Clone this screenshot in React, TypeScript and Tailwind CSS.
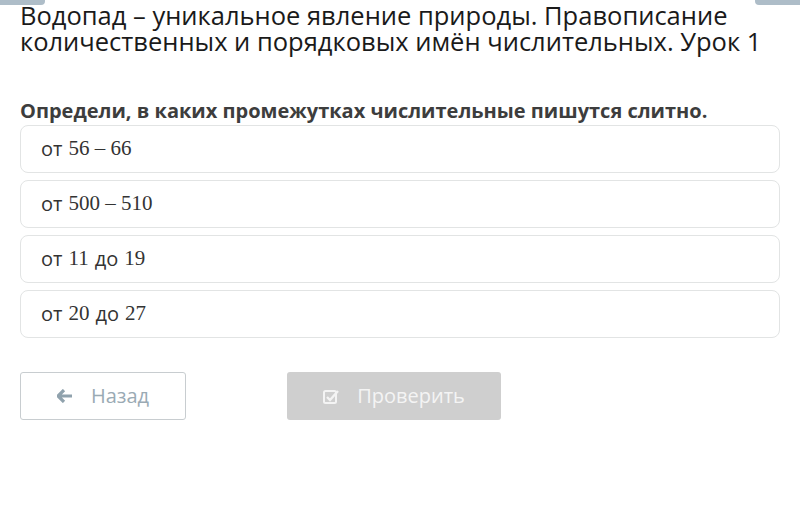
import React from "react";

const opts: [string, string, string, string][] = [
  ["от", "56 – 66", "", ""],
  ["от", "500 – 510", "", ""],
  ["от", "11", "до", "19"],
  ["от", "20", "до", "27"],
];

export default function App() {
  return (
    <div className="relative w-[800px] h-[508px] bg-white overflow-hidden" style={{ fontFamily: '"Open Sans", sans-serif' }}>
      <div className="absolute left-0 top-0 w-[45px] h-[5px] bg-[#aebdc8] rounded-br-[4px]" />
      <div className="absolute right-0 top-0 w-[45px] h-[5px] bg-[#aebdc8] rounded-bl-[4px]" />
      <div className="px-[20px] pt-[2px]">
        <h1 className="text-[25.5px] leading-[26px] text-[#1a1a1a] font-normal whitespace-nowrap">
          Водопад – уникальное явление природы. Правописание
          <br />
          количественных и порядковых имён числительных. Урок 1
        </h1>
        <p className="mt-[45px] text-[20px] leading-[24px] font-bold text-[#3d3d3d]">
          Определи, в каких промежутках числительные пишутся слитно.
        </p>
        <div className="mt-[2px] flex flex-col gap-[7px] w-[760px]">
          {opts.map((o, i) => (
            <div key={i} className="h-[48px] border border-[#e2e4e4] rounded-[8px] flex items-center pl-[20px] text-[20px] text-[#333]">
              <span>{o[0]}</span>
              <span className="ml-[6px] text-[21px]" style={{ fontFamily: '"Liberation Serif", serif' }}>{o[1]}</span>
              {o[2] && <span className="ml-[6px]">{o[2]}</span>}
              {o[3] && <span className="ml-[6px] text-[21px]" style={{ fontFamily: '"Liberation Serif", serif' }}>{o[3]}</span>}
            </div>
          ))}
        </div>
        <div className="mt-[34px] flex gap-[101px]">
          <button className="w-[166px] h-[48px] border border-[#c8cdd0] rounded-[3px] flex items-center justify-center gap-[18px] text-[20px] text-[#9aaab4] bg-white">
            <svg width="16" height="14" viewBox="0 0 16 14">
              <path d="M7 1 L1 7 L7 13 M1 7 H15" stroke="#90a2ad" strokeWidth="3.2" fill="none" strokeLinejoin="round" />
            </svg>
            <span>Назад</span>
          </button>
          <button className="w-[214px] h-[48px] bg-[#cfcfcf] rounded-[3px] flex items-center justify-center gap-[18px] text-[20px] text-[#f4f4f4]">
            <svg width="16" height="15" viewBox="0 0 16 15">
              <rect x="1" y="2" width="12" height="12" rx="1.5" stroke="#f4f4f4" strokeWidth="2" fill="none" />
              <path d="M4 8 L7 11 L15 2" stroke="#f4f4f4" strokeWidth="2.4" fill="none" />
            </svg>
            <span>Проверить</span>
          </button>
        </div>
      </div>
    </div>
  );
}
